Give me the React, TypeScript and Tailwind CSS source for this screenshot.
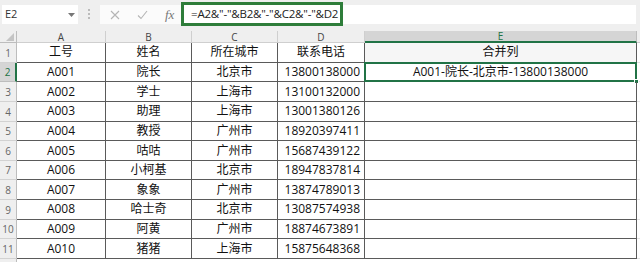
import React from 'react';

const rows = [
    ['A001', '院长', '北京市', '13800138000'],
    ['A002', '学士', '上海市', '13100132000'],
    ['A003', '助理', '上海市', '13001380126'],
    ['A004', '教授', '广州市', '18920397411'],
    ['A005', '咕咕', '广州市', '15687439122'],
    ['A006', '小柯基', '北京市', '18947837814'],
    ['A007', '象象', '广州市', '13874789013'],
    ['A008', '哈士奇', '北京市', '13087574938'],
    ['A009', '阿黄', '广州市', '18874673891'],
    ['A010', '猪猪', '上海市', '15875648368'],
];

const cell = 'h-full flex items-center border-r border-b border-[#5a5a5a] text-[12px] text-[#111]';

const RowHead: React.FC<{ n?: number; active?: boolean }> = ({ n, active }) => (
    <div className={`w-[17px] h-full flex items-end justify-center pb-[1px] border-b text-[10px] ${active ? 'bg-[#d5d5d5] border-[#bdbdbd] border-r-2 border-r-[#217346] text-[#217346]' : 'bg-[#efefef] border-[#d2d2d2] border-r border-r-[#bdbdbd] text-[#666]'}`}>
        {n}
    </div>
);

const FormulaBar = () => (
    <div className="h-[31px] bg-[#efefef] flex items-start pt-[2px] pr-[4px]">
        <div className="mt-[3px] ml-[2px] w-[76px] h-[19px] bg-white flex items-center justify-between px-[3px]">
            <span className="text-[11px] text-[#333]">E2</span>
            <svg width="7" height="4" viewBox="0 0 7 4"><path d="M0 0h7L3.5 4z" fill="#777" /></svg>
        </div>
        <div className="w-[22px] h-[24px] flex flex-col items-center justify-center gap-[2px]">
            <span className="w-[2px] h-[2px] bg-[#bbb]" />
            <span className="w-[2px] h-[2px] bg-[#bbb]" />
            <span className="w-[2px] h-[2px] bg-[#bbb]" />
        </div>
        <div className="mt-[3px] w-[81px] h-[19px] bg-[#fbfbfb] flex items-center">
            <svg className="ml-[10px]" width="10" height="10" viewBox="0 0 10 10"><path d="M1 1l8 8M9 1l-8 8" stroke="#b5b5b5" strokeWidth="1.1" /></svg>
            <svg className="ml-[17px]" width="11" height="10" viewBox="0 0 11 10"><path d="M1 5.5l3 3L10 1" stroke="#b5b5b5" strokeWidth="1.1" fill="none" /></svg>
            <span className="ml-[17px] text-[13px] italic text-[#777] font-['Liberation_Serif',serif]">fx</span>
        </div>
        <div className="w-[162px] h-[24px] border-[3px] border-[#2e7d3a] bg-white flex items-center pl-[7px] overflow-hidden">
            <span className="text-[11.5px] tracking-[-0.2px] text-[#222] whitespace-nowrap">=A2&amp;"-"&amp;B2&amp;"-"&amp;C2&amp;"-"&amp;D2</span>
        </div>
        <div className="flex-1 mt-[3px] h-[19px] bg-white" />
    </div>
);

export default function App() {
    return (
        <div className="w-[640px] h-[262px] overflow-hidden bg-white font-['Open_Sans','Noto_Sans_CJK_SC',sans-serif]">
            <FormulaBar />
            <div className="h-[12px] flex bg-[#efefef] text-[10px] text-[#444] leading-none">
                <div className="w-[17px] h-full border-r border-b border-[#bdbdbd] relative overflow-hidden">
                    <svg className="absolute right-[2px] bottom-[1px]" width="8" height="8" viewBox="0 0 8 8"><path d="M8 0v8H0z" fill="#c4c4c4" /></svg>
                </div>
                {['A', 'B', 'C', 'D'].map((c, i) => (
                    <div key={c} className={`h-full flex items-center justify-center border-r border-b border-[#cfcfcf] ${['w-[89px]', 'w-[86px]', 'w-[86px]', 'w-[87px]'][i]}`}>{c}</div>
                ))}
                <div className="w-[272px] h-full flex items-center justify-center bg-[#d5d5d5] border-r border-[#bdbdbd] border-b-2 border-b-[#217346] text-[#217346]">E</div>
                <div className="flex-1 h-full border-b border-[#cfcfcf]" />
            </div>
            <div className="flex h-[19.65px]">
                <RowHead n={1} />
                <div className={`${cell} w-[89px] justify-center`}>工号</div>
                <div className={`${cell} w-[86px] justify-center`}>姓名</div>
                <div className={`${cell} w-[86px] justify-center`}>所在城市</div>
                <div className={`${cell} w-[87px] justify-center`}>联系电话</div>
                <div className={`${cell} w-[272px] justify-center bg-[#f6f6f6]`}>合并列</div>
                <div className="flex-1 h-full border-b border-[#e3e3e3]" />
            </div>
            {rows.map((r, i) => (
                <div key={r[0]} className="flex h-[19.65px]">
                    <RowHead n={i + 2} active={i === 0} />
                    <div className={`${cell} w-[89px] justify-center`}>{r[0]}</div>
                    <div className={`${cell} w-[86px] justify-center`}>{r[1]}</div>
                    <div className={`${cell} w-[86px] justify-center`}>{r[2]}</div>
                    <div className={`${cell} w-[87px] justify-end pr-[4px]`}>{r[3]}</div>
                    <div className={`${cell} w-[272px] justify-center relative`}>
                        {i === 0 && (
                            <>
                                <span>A001-院长-北京市-13800138000</span>
                                <div className="absolute -left-[1px] -top-[1px] -right-[1px] -bottom-[1px] border-2 border-[#217346]" />
                                <div className="absolute -right-[3px] -bottom-[3px] w-[5px] h-[5px] bg-[#217346] border border-white" />
                            </>
                        )}
                    </div>
                    <div className="flex-1 h-full border-b border-[#e3e3e3]" />
                </div>
            ))}
            <div className="flex h-[19.65px]">
                <RowHead />
                <div className="flex-1" />
            </div>
        </div>
    );
}
